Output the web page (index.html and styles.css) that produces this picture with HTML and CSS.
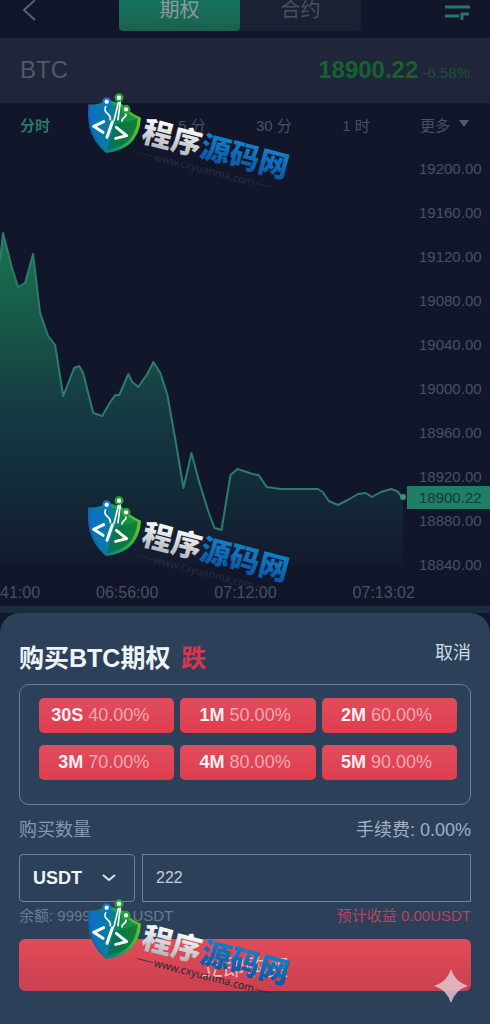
FILE: index.html
```
<!DOCTYPE html>
<html lang="zh-CN">
<head>
<meta charset="utf-8">
<meta name="viewport" content="width=device-width, initial-scale=1">
<title>购买BTC期权</title>
<link rel="stylesheet" href="styles.css">
</head>
<body>
<svg class="defs" width="0" height="0" aria-hidden="true">
  <defs>
    <linearGradient id="shieldFill" x1="0" y1="0.4" x2="1" y2="0.5">
      <stop offset="0" stop-color="#0b6fcb"/><stop offset="0.42" stop-color="#087f9c"/><stop offset="0.62" stop-color="#0c8a48"/><stop offset="1" stop-color="#1f9c3a"/>
    </linearGradient>
    <linearGradient id="shieldEdge" x1="0" y1="0.6" x2="1" y2="0.4">
      <stop offset="0" stop-color="#1359b8"/><stop offset="0.5" stop-color="#0f9a6a"/><stop offset="1" stop-color="#6cc425"/>
    </linearGradient>
    <linearGradient id="silver" x1="0" y1="0" x2="0" y2="1">
      <stop offset="0.2" stop-color="#ffffff"/><stop offset="1" stop-color="#a4a6ac"/>
    </linearGradient>
    <linearGradient id="azure" x1="0" y1="0" x2="0" y2="1">
      <stop offset="0.2" stop-color="#1183cc"/><stop offset="1" stop-color="#0b4c9c"/>
    </linearGradient>
    <symbol id="brand" viewBox="0 0 690 315">
      <path d="M40 58Q76 60 96 44L140 56Q164 84 198 98Q196 150 160 180Q132 200 93 204Q54 172 43 126Q36 92 40 58Z" fill="url(#shieldEdge)"/>
      <path d="M46 65Q78 66 98 56L138 66Q158 88 188 101Q184 146 155 172Q130 190 96 195Q60 166 50 124Q44 92 46 65Z" fill="url(#shieldFill)"/>
      <path d="M118 120L188 101Q184 146 155 172Q130 190 96 195Z" fill="#06603c" opacity="0.45"/>
      <g fill="none" stroke="#fff" stroke-linecap="round">
        <path d="M93 62C80 88 110 82 106 104M131 50L117 106M136 50L129 104M152 84C158 99 140 95 141 108" stroke-width="5"/>
        <path d="M86 110L56 124L84 142M124 127L155 152L122 160" stroke-width="9" stroke-linejoin="round"/>
        <path d="M112 111L96 157" stroke-width="9"/>
      </g>
      <g fill="#fff" stroke-width="7">
        <circle cx="95" cy="50" r="10" stroke="#1474cc"/>
        <circle cx="132" cy="38" r="10" stroke="#2aa237"/>
        <circle cx="153" cy="73" r="10" stroke="#2aa237"/>
      </g>
      <g transform="translate(196 168) rotate(14.5)">
        <text class="brand-name" x="0" y="0"><tspan fill="url(#silver)">程序</tspan><tspan fill="url(#azure)">源码网</tspan></text>
        <text class="brand-url" x="207" y="46" text-anchor="middle">www.cxyuanma.com</text>
        <path d="M0 36H48M366 36H414" stroke="currentColor" stroke-width="2"/>
      </g>
    </symbol>
  </defs>
</svg>

<main class="app">
  <header class="topbar">
    <button class="icon-btn back" aria-label="返回">
      <svg width="16" height="24" viewBox="0 0 16 24"><path d="M15 0L4 10L15 20" fill="none" stroke="#596070" stroke-width="2"/></svg>
    </button>
    <nav class="tabs">
      <button class="tab tab-on">期权</button>
      <button class="tab">合约</button>
    </nav>
    <button class="icon-btn" aria-label="订单">
      <svg width="26" height="24" viewBox="0 0 26 24"><path d="M1 7H26M1 16H15" stroke="#277766" stroke-width="3"/><path d="M18 20V14H25" fill="none" stroke="#277766" stroke-width="3"/></svg>
    </button>
  </header>

  <section class="quote">
    <h1 class="symbol">BTC</h1>
    <p class="last"><strong>18900.22</strong> <span>-6.58%</span></p>
  </section>

  <nav class="intervals">
    <button class="interval interval-on">分时</button>
    <button class="interval">1 分</button>
    <button class="interval">5 分</button>
    <button class="interval">30 分</button>
    <button class="interval">1 时</button>
    <button class="interval interval-more">更多
      <svg width="12" height="8" viewBox="0 0 12 8"><path d="M1 0H11L6 7Z" fill="#555b6b"/></svg>
    </button>
  </nav>

  <section class="chart">
    <svg class="plot" viewBox="0 0 405 440" preserveAspectRatio="none" aria-label="BTC 分时图">
      <defs>
        <linearGradient id="area" gradientUnits="userSpaceOnUse" x1="0" y1="86" x2="0" y2="418">
          <stop offset="0" stop-color="#1a7450"/><stop offset="0.35" stop-color="#174f45"/><stop offset="0.5" stop-color="#153d44"/><stop offset="0.75" stop-color="#132c3a"/><stop offset="1" stop-color="#131a2e"/>
        </linearGradient>
      </defs>
      <path fill="url(#area)" d="M0 115L3 86L12 121L18 140L25 136L33 107L40 166L48 189L55 198L63 249L74 221L79 219L83 226L93 266L102 269L110 255L115 248L119 248L128 227L132 235L138 240L147 227L153 215L160 226L167 248L175 293L183 341L191 306L199 336L208 365L214 381L221 383L225 358L230 328L237 322L252 327L258 328L266 340L280 342L317 342L322 345L328 354L337 358L347 353L357 347L365 346L371 350L380 345L390 342L396 344L402 351V418H0Z"/>
      <path class="price-line" d="M0 115L3 86L12 121L18 140L25 136L33 107L40 166L48 189L55 198L63 249L74 221L79 219L83 226L93 266L102 269L110 255L115 248L119 248L128 227L132 235L138 240L147 227L153 215L160 226L167 248L175 293L183 341L191 306L199 336L208 365L214 381L221 383L225 358L230 328L237 322L252 327L258 328L266 340L280 342L317 342L322 345L328 354L337 358L347 353L357 347L365 346L371 350L380 345L390 342L396 344L402 351"/>
      <circle cx="402" cy="350" r="3" fill="#39907c"/>
    </svg>
    <div class="scale">
      <span>19200.00</span><span>19160.00</span><span>19120.00</span><span>19080.00</span><span>19040.00</span>
      <span>19000.00</span><span>18960.00</span><span>18920.00</span><span>18880.00</span><span>18840.00</span>
      <strong class="marker">18900.22</strong>
    </div>
  </section>
  <div class="times"><span>41:00</span><span>06:56:00</span><span>07:12:00</span><span>07:13:02</span></div>

  <form class="sheet">
    <div class="row sheet-head">
      <h2>购买BTC期权 <em>跌</em></h2>
      <button type="button" class="cancel">取消</button>
    </div>
    <div class="terms">
      <button type="button" class="term"><b>30S</b> 40.00%</button>
      <button type="button" class="term"><b>1M</b> 50.00%</button>
      <button type="button" class="term"><b>2M</b> 60.00%</button>
      <button type="button" class="term"><b>3M</b> 70.00%</button>
      <button type="button" class="term"><b>4M</b> 80.00%</button>
      <button type="button" class="term"><b>5M</b> 90.00%</button>
    </div>
    <div class="row labels">
      <label for="amount">购买数量</label>
      <span class="fee">手续费: 0.00%</span>
    </div>
    <div class="fields">
      <div class="coin">
        <select aria-label="币种"><option>USDT</option></select>
        <svg class="chevron" width="16" height="10" viewBox="0 0 16 10"><path d="M2 2L8 7L14 2" fill="none" stroke="#dce6ef" stroke-width="2"/></svg>
      </div>
      <input id="amount" type="text" value="222">
    </div>
    <div class="row notes">
      <span>余额: 999999.00 USDT</span>
      <span class="profit">预计收益 0.00USDT</span>
    </div>
    <button type="button" class="submit">立即购买</button>
  </form>

  <svg class="mark mark-top" aria-hidden="true"><use href="#brand"/></svg>
  <svg class="mark mark-mid" aria-hidden="true"><use href="#brand"/></svg>
  <svg class="mark mark-low" aria-hidden="true"><use href="#brand"/></svg>
  <svg class="spark" width="34" height="34" viewBox="0 0 34 34" aria-hidden="true"><path d="M17 0Q21 13 34 17Q21 21 17 34Q13 21 0 17Q13 13 17 0Z" fill="#e5c3cf" fill-opacity="0.85"/></svg>
</main>
</body>
</html>
```

FILE: styles.css
```
* { box-sizing: border-box; }

body {
  margin: 0;
  background: #11162a;
  color: #4a5061;
  font-family: "Liberation Sans", "Noto Sans CJK SC", sans-serif;
}

h1, h2, p { margin: 0; }

button {
  margin: 0;
  padding: 0;
  border: 0;
  background: none;
  color: inherit;
  font: inherit;
}

.defs { position: absolute; }

.app {
  position: relative;
  display: flex;
  flex-direction: column;
  min-height: 100vh;
  overflow: hidden;
}

.topbar {
  display: flex;
  justify-content: space-between;
  align-items: flex-start;
  height: 38px;
  padding: 0 20px;
}

.icon-btn { display: flex; width: 26px; }
.back { width: 16px; }

.tabs {
  display: flex;
  width: 242px;
  height: 31px;
  border-radius: 0 0 4px 4px;
  background: #1b2033;
  overflow: hidden;
}

.tab {
  flex: 1;
  padding-bottom: 11px;
  font-size: 20px;
  line-height: 20px;
}

.tab-on {
  border-radius: 0 0 4px 4px;
  background: linear-gradient(#14735d, #1c604f);
  color: #8d9b9b;
}

.quote {
  display: flex;
  justify-content: space-between;
  align-items: center;
  height: 65px;
  padding: 0 20px 2px;
  background: #20253a;
}

.symbol { font-size: 24px; font-weight: 400; color: #51576a; }

.last { font-size: 15px; color: #1b5236; }
.last strong { font-size: 24px; color: #17612f; }

.intervals {
  display: flex;
  justify-content: space-between;
  align-items: center;
  height: 44px;
  padding: 0 20px 2px;
}

.interval { font-size: 15px; white-space: nowrap; }
.interval-on { color: #277766; font-weight: 700; }
.interval-more { display: flex; align-items: center; gap: 8px; }

.chart { display: flex; height: 440px; }

.plot { flex: 1; min-width: 0; height: 440px; }

.price-line {
  fill: none;
  stroke: #2d7c6b;
  stroke-width: 2;
  stroke-linejoin: round;
}

.scale {
  position: relative;
  display: flex;
  flex-direction: column;
  width: 84px;
  font-size: 15px;
  line-height: 44px;
  padding-left: 13px;
}

.marker {
  position: absolute;
  top: 339px;
  right: 0;
  left: 1px;
  padding-left: 12px;
  background: #1f7e63;
  color: #153c3b;
  font-weight: 400;
  line-height: 23px;
}

.times {
  display: flex;
  gap: 56px;
  height: 26px;
  border-bottom: 7px solid #1a2c3e;
  font-size: 16px;
  line-height: 12px;
}
.times span:last-child { margin-left: 20px; }

.sheet {
  flex: 1;
  padding: 23px 19px 34px;
  border-radius: 20px 20px 0 0;
  background: #2c405a;
}

.row { display: flex; justify-content: space-between; align-items: center; }

.sheet-head { height: 40px; margin-bottom: 8px; color: #eef5f8; }
.sheet-head h2 { font-size: 25px; }
.sheet-head em { margin-left: 4px; color: #dc354b; font-style: normal; }
.cancel { padding-bottom: 10px; color: #ced9e3; font-size: 18px; }

.terms {
  display: grid;
  grid-template-columns: repeat(3, 1fr);
  gap: 12px 6px;
  padding: 13px 13px 24px 19px;
  border: 1px solid #5f8298;
  border-radius: 10px;
}

.term {
  height: 35px;
  padding-right: 25px;
  border-radius: 5px;
  background: linear-gradient(#e04d5d, #df3d4e);
  color: #f4a9b2;
  font-size: 18px;
  text-align: right;
  white-space: nowrap;
}
.term b { color: #fff0f2; }

.labels { height: 49px; padding-bottom: 3px; color: #8497ac; font-size: 18px; }
.fee { color: #a2b0c2; }

.fields { display: flex; gap: 7px; height: 48px; }

.coin { position: relative; width: 116px; }

.coin select,
.fields input {
  width: 100%;
  height: 100%;
  margin: 0;
  padding: 0 13px;
  border: 1px solid #6d8399;
  background: transparent;
  color: #edf3f7;
  font-family: inherit;
}
.coin select { appearance: none; border-radius: 4px; font-size: 18px; font-weight: 700; }
.fields input { flex: 1; min-width: 0; border-radius: 0; color: #c3cfda; font-size: 16px; }

.chevron { position: absolute; top: 19px; right: 18px; pointer-events: none; }

.notes { height: 37px; padding-bottom: 13px; color: #687b91; font-size: 15px; }
.profit { color: #b4455d; }

.submit {
  display: block;
  width: 100%;
  height: 52px;
  border-radius: 6px;
  background: linear-gradient(#e44b59, #c84150);
  color: #f5b4b2;
  font-size: 22px;
}

.mark {
  position: absolute;
  left: 75px;
  width: 230px;
  height: 105px;
  color: #272d40;
  pointer-events: none;
}
.mark-top { top: 85px; }
.mark-mid { top: 488px; }
.mark-low { top: 891px; color: #2b2435; }

.brand-name {
  font-family: "Noto Sans CJK SC", sans-serif;
  font-size: 90px;
  font-weight: 900;
}
.brand-url { fill: currentColor; font-family: "Noto Sans", sans-serif; font-size: 32px; }

.spark { position: absolute; right: 22px; bottom: 22px; }
```
